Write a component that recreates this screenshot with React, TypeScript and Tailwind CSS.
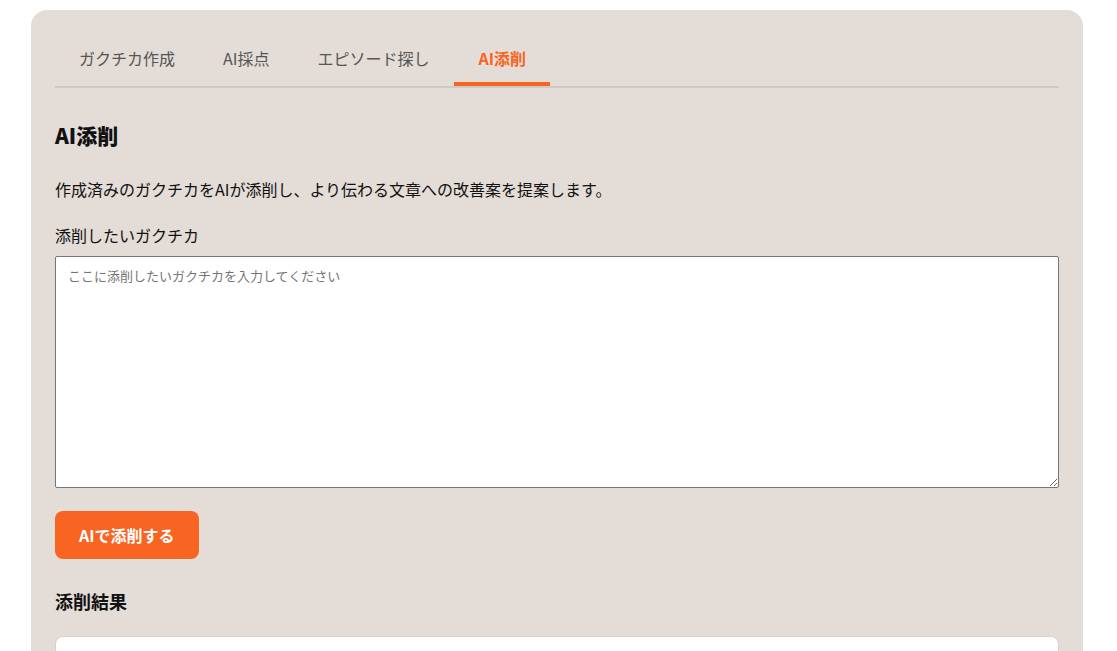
import React from "react";

const tabs = ["ガクチカ作成", "AI採点", "エピソード探し", "AI添削"];

export default function App() {
  return (
    <div
      className="min-h-screen bg-white pt-[10px] pl-[31px]"
      style={{ fontFamily: '"Noto Sans CJK JP", "Noto Sans", sans-serif' }}
    >
      <div className="w-[1052px] rounded-2xl bg-[#e3dcd7] px-6 pt-6 pb-10">
        <div className="flex border-b-2 border-[#cfc9c5]">
          {tabs.map((t, i) => {
            const active = i === 3;
            return (
              <div
                key={t}
                className={
                  active
                    ? "ml-px border-b-4 border-[#f86421] px-6 py-3 text-base leading-6 font-bold text-[#f86421]"
                    : "border-b-4 border-transparent px-6 py-3 text-base leading-6 text-[#555555]"
                }
              >
                {t}
              </div>
            );
          })}
        </div>

        <h2 className="mt-[31px] text-[21px] leading-[32px] font-black text-[#111111]">AI添削</h2>
        <p className="mt-[26px] text-base leading-6 text-[#111111]">
          作成済みのガクチカをAIが添削し、より伝わる文章への改善案を提案します。
        </p>

        <label className="mt-[22px] block text-base leading-6 text-[#111111]">添削したいガクチカ</label>
        <textarea
          className="mt-[9px] block h-[232px] w-full rounded-[2px] border border-[#767676] bg-white px-3 pt-[10px] pb-3 text-[13px] leading-[18px] text-[#111111] placeholder:text-[#757575] outline-none"
          placeholder="ここに添削したいガクチカを入力してください"
        />

        <button className="mt-[23px] block rounded-lg bg-[#f86421] px-6 py-3 text-base leading-6 font-bold text-white">
          AIで添削する
        </button>

        <h3 className="mt-[28px] text-lg leading-7 font-bold text-[#111111]">添削結果</h3>
        <div className="mt-[21px] h-[200px] w-full rounded-lg border border-[#d8d2ce] bg-white" />
      </div>
    </div>
  );
}
